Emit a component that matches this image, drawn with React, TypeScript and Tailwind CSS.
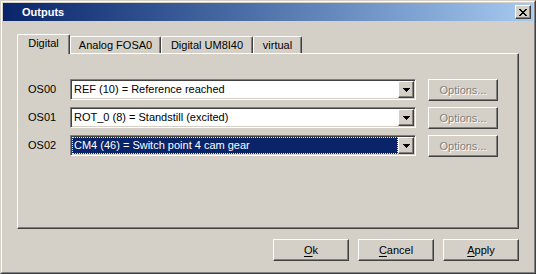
import React from "react";

const raised =
  "border border-t-white border-l-white border-r-[#404040] border-b-[#404040] shadow-[inset_-1px_-1px_0_#808080]";

function CloseGlyph() {
  const rows = ["XX....XX", ".XX..XX.", "..XXXX..", "...XX...", "..XXXX..", ".XX..XX.", "XX....XX"];
  const rects: React.ReactNode[] = [];
  rows.forEach((r, y) =>
    r.split("").forEach((c, x) => {
      if (c === "X") rects.push(<rect key={`${x}-${y}`} x={x} y={y} width={1} height={1} fill="#000" />);
    })
  );
  return (
    <svg width="8" height="7" viewBox="0 0 8 7" shapeRendering="crispEdges">
      {rects}
    </svg>
  );
}

function Arrow() {
  return (
    <svg width="7" height="4" viewBox="0 0 7 4" shapeRendering="crispEdges">
      <rect x="0" y="0" width="7" height="1" fill="#000" />
      <rect x="1" y="1" width="5" height="1" fill="#000" />
      <rect x="2" y="2" width="3" height="1" fill="#000" />
      <rect x="3" y="3" width="1" height="1" fill="#000" />
    </svg>
  );
}

function Combo({ text, selected }: { text: string; selected?: boolean }) {
  return (
    <div className="w-[346px] h-[21px] flex border border-t-[#808080] border-l-[#808080] border-r-white border-b-white shadow-[inset_1px_1px_0_#404040,inset_-1px_-1px_0_#d4d0c8] p-[1px]">
      <div className="flex-1 bg-white flex items-stretch">
        {selected ? (
          <div className="flex-1 bg-[#0a246a] border border-dotted border-[#f4eec8] flex items-center pl-[1px] text-white">
            {text}
          </div>
        ) : (
          <div className="flex-1 flex items-center pl-[2px] text-black">{text}</div>
        )}
      </div>
      <div className={`w-[16px] h-[17px] bg-[#d4d0c8] flex items-center justify-center ${raised}`}>
        <Arrow />
      </div>
    </div>
  );
}

export default function App() {
  const rows = [
    { label: "OS00", text: "REF (10) = Reference reached" },
    { label: "OS01", text: "ROT_0 (8) = Standstill (excited)" },
    { label: "OS02", text: "CM4 (46) = Switch point 4 cam gear", selected: true },
  ];
  const tabs = [
    { name: "Analog FOSA0", w: "w-[91px]" },
    { name: "Digital UM8I40", w: "w-[92px]" },
    { name: "virtual", w: "w-[49px]" },
  ];
  return (
    <div className="w-[536px] h-[274px] bg-[#d4d0c8] font-['Liberation_Sans',Arial,sans-serif] text-[11px] text-black leading-none select-none">
      <div className="w-full h-full border border-t-[#d4d0c8] border-l-[#d4d0c8] border-r-[#404040] border-b-[#404040]">
        <div className="w-full h-full border border-t-white border-l-white border-r-[#808080] border-b-[#808080] p-[1px] flex flex-col">
          {/* Title bar */}
          <div className="h-[18px] flex items-center bg-gradient-to-r from-[#0a246a] to-[#a6caf0] pl-[19px] pr-[2px]">
            <span className="text-white font-bold text-[11px] flex-1">Outputs</span>
            <div className={`w-[16px] h-[14px] bg-[#d4d0c8] flex items-center justify-center ${raised}`}>
              <CloseGlyph />
            </div>
          </div>

          <div className="px-[14px] pt-[13px] flex flex-col">
            {/* Tabs */}
            <div className="h-[19px] flex items-end">
              <div className="w-[53px] h-[20px] -mb-[1px] relative z-10 bg-[#d4d0c8] border-l border-t border-r border-l-white border-t-white border-r-[#404040] rounded-tl-[2px] rounded-tr-[2px] shadow-[inset_-1px_0_0_#808080] flex items-center justify-center pb-[2px]">
                Digital
              </div>
              {tabs.map((t) => (
                <div
                  key={t.name}
                  className={`${t.w} h-[17px] bg-[#d4d0c8] border-l border-t border-r border-l-white border-t-white border-r-[#404040] rounded-tl-[2px] rounded-tr-[2px] shadow-[inset_-1px_0_0_#808080] flex items-center justify-center`}
                >
                  {t.name}
                </div>
              ))}
            </div>

            {/* Panel */}
            <div className="h-[176px] border border-t-white border-l-white border-r-[#404040] border-b-[#404040] shadow-[inset_-1px_-1px_0_#808080] pt-[25px] pl-[10px] flex flex-col gap-[6px]">
              {rows.map((r) => (
                <div key={r.label} className="h-[22px] flex items-start">
                  <div className="w-[42px] h-[21px] flex items-center">{r.label}</div>
                  <Combo text={r.text} selected={r.selected} />
                  <div
                    className={`ml-[12px] w-[70px] h-[22px] bg-[#d4d0c8] flex items-center justify-center text-[#808080] [text-shadow:1px_1px_0_#ffffff] ${raised}`}
                  >
                    Options...
                  </div>
                </div>
              ))}
            </div>

            {/* Buttons */}
            <div className="mt-[10px] flex justify-end gap-[9px]">
              <div className={`w-[76px] h-[22px] bg-[#d4d0c8] flex items-center justify-center ${raised}`}>
                <span>
                  <span className="underline underline-offset-[2px]">O</span>k
                </span>
              </div>
              <div className={`w-[76px] h-[22px] bg-[#d4d0c8] flex items-center justify-center ${raised}`}>
                <span>
                  <span className="underline underline-offset-[2px]">C</span>ancel
                </span>
              </div>
              <div className={`w-[76px] h-[22px] bg-[#d4d0c8] flex items-center justify-center ${raised}`}>
                <span>
                  <span className="underline underline-offset-[2px]">A</span>pply
                </span>
              </div>
            </div>
          </div>
        </div>
      </div>
    </div>
  );
}
